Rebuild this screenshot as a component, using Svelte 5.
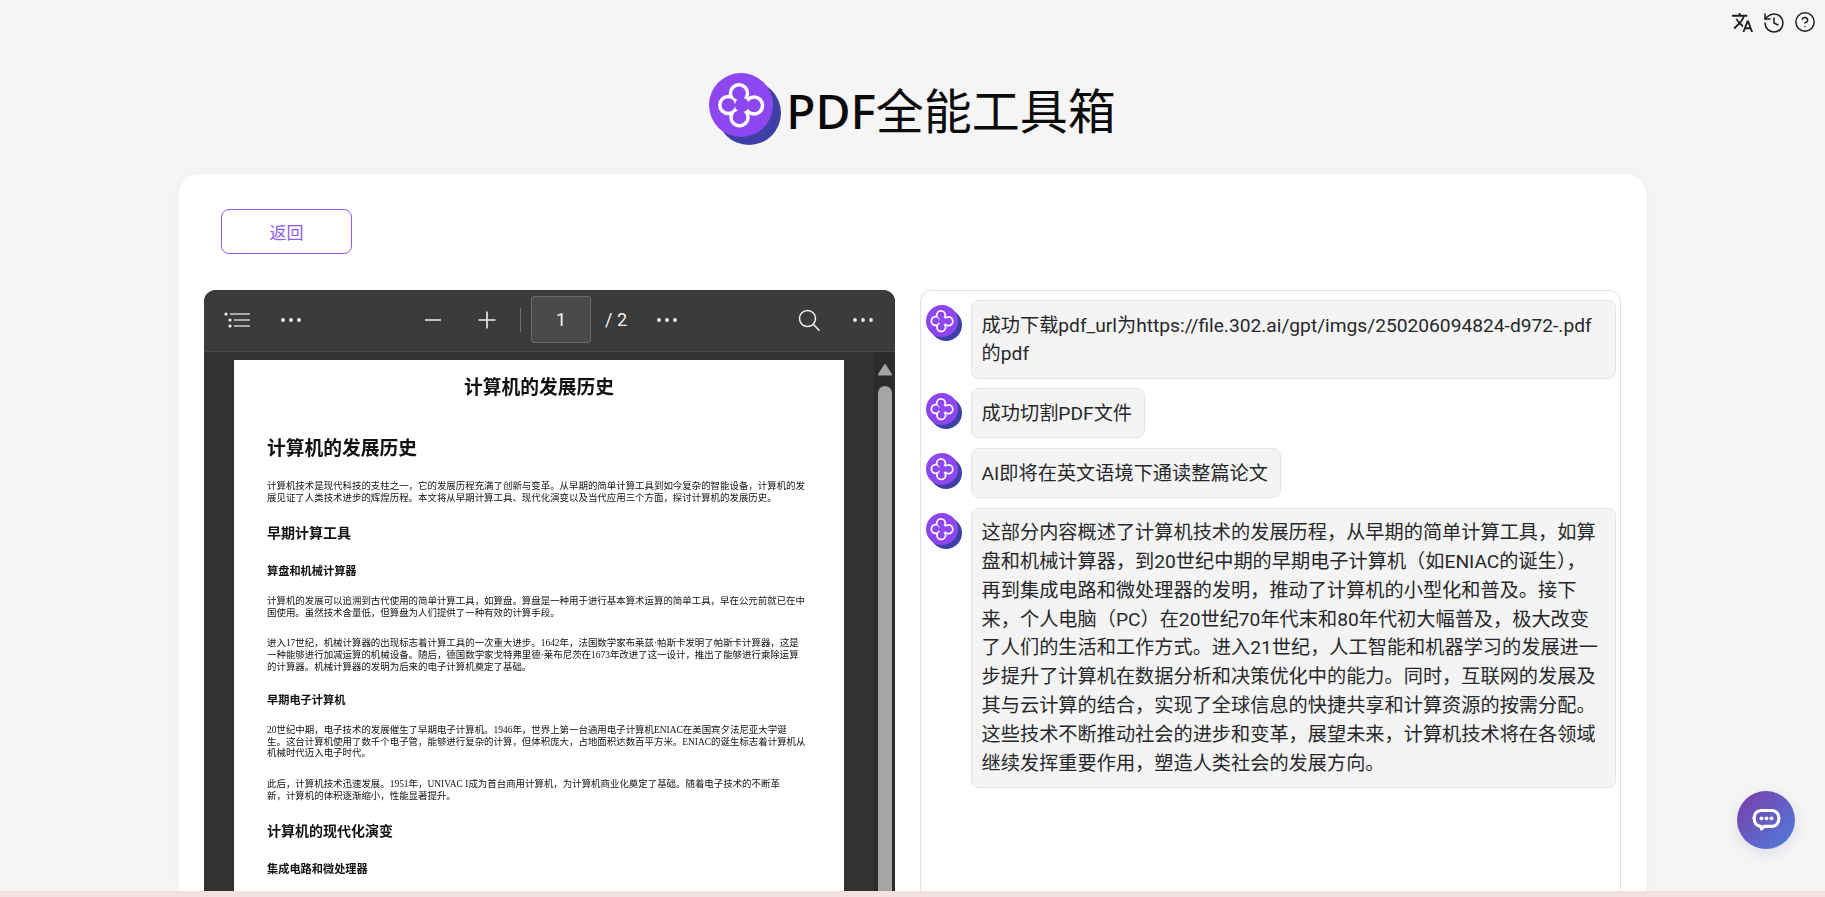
<script>
const messages = [
  '成功下载pdf_url为https://file.302.ai/gpt/imgs/250206094824-d972-.pdf的pdf',
  '成功切割PDF文件',
  'AI即将在英文语境下通读整篇论文',
  '这部分内容概述了计算机技术的发展历程，从早期的简单计算工具，如算盘和机械计算器，到20世纪中期的早期电子计算机（如ENIAC的诞生），再到集成电路和微处理器的发明，推动了计算机的小型化和普及。接下来，个人电脑（PC）在20世纪70年代末和80年代初大幅普及，极大改变了人们的生活和工作方式。进入21世纪，人工智能和机器学习的发展进一步提升了计算机在数据分析和决策优化中的能力。同时，互联网的发展及其与云计算的结合，实现了全球信息的快捷共享和计算资源的按需分配。这些技术不断推动社会的进步和变革，展望未来，计算机技术将在各领域继续发挥重要作用，塑造人类社会的发展方向。'
];

const doc = [
  { t: 'h1', lines: ['计算机的发展历史'] },
  { t: 'p', lines: ['计算机技术是现代科技的支柱之一，它的发展历程充满了创新与变革。从早期的简单计算工具到如今复杂的智能设备，计算机的发', '展见证了人类技术进步的辉煌历程。本文将从早期计算工具、现代化演变以及当代应用三个方面，探讨计算机的发展历史。'] },
  { t: 'h2', lines: ['早期计算工具'] },
  { t: 'h3', lines: ['算盘和机械计算器'] },
  { t: 'p', lines: ['计算机的发展可以追溯到古代使用的简单计算工具，如算盘。算盘是一种用于进行基本算术运算的简单工具，早在公元前就已在中', '国使用。虽然技术含量低，但算盘为人们提供了一种有效的计算手段。'] },
  { t: 'p', lines: ['进入17世纪，机械计算器的出现标志着计算工具的一次重大进步。1642年，法国数学家布莱兹·帕斯卡发明了帕斯卡计算器，这是', '一种能够进行加减运算的机械设备。随后，德国数学家戈特弗里德·莱布尼茨在1673年改进了这一设计，推出了能够进行乘除运算', '的计算器。机械计算器的发明为后来的电子计算机奠定了基础。'] },
  { t: 'h3', lines: ['早期电子计算机'] },
  { t: 'p', lines: ['20世纪中期，电子技术的发展催生了早期电子计算机。1946年，世界上第一台通用电子计算机ENIAC在美国宾夕法尼亚大学诞', '生。这台计算机使用了数千个电子管，能够进行复杂的计算，但体积庞大，占地面积达数百平方米。ENIAC的诞生标志着计算机从', '机械时代迈入电子时代。'] },
  { t: 'p', lines: ['此后，计算机技术迅速发展。1951年，UNIVAC I成为首台商用计算机，为计算机商业化奠定了基础。随着电子技术的不断革', '新，计算机的体积逐渐缩小，性能显著提升。'] },
  { t: 'h2', lines: ['计算机的现代化演变'] },
  { t: 'h3', lines: ['集成电路和微处理器'] }
];

const lobes = [[19.3, 32], [30, 20.3], [45, 32.5], [30.5, 44.3]];
</script>

{#snippet logo(size)}
  <svg class="logo" width={size} height={size} viewBox="0 0 72 72">
    <circle cx="40" cy="40" r="32" fill="#3f40a5" />
    <circle cx="32" cy="32" r="32" fill="#8e47f0" />
    {#each lobes as [x, y]}
      <circle cx={x} cy={y} r="10.3" fill="#fff" />
    {/each}
    <circle cx="33" cy="32" r="7.5" fill="#fff" />
    {#each lobes as [x, y]}
      <circle cx={x} cy={y} r="6.8" fill="#8e47f0" />
    {/each}
    <circle cx="33" cy="32" r="7.2" fill="#8e47f0" />
  </svg>
{/snippet}

{#snippet dots()}
  <button class="tool" type="button" aria-label="more">
    <svg width="20" height="4" viewBox="0 0 20 4" fill="#f1f1f1">
      <circle cx="2" cy="2" r="1.9" /><circle cx="10" cy="2" r="1.9" /><circle cx="18" cy="2" r="1.9" />
    </svg>
  </button>
{/snippet}

<div class="shell">
  <div class="topbar">
    <svg class="top-icon" width="23" height="23" viewBox="0 0 24 24" fill="#1f1f1f">
      <path d="M12.87 15.07l-2.54-2.51.03-.03c1.74-1.94 2.98-4.17 3.71-6.53H17V4h-7V2H8v2H1v1.99h11.17C11.5 7.92 10.4 9.75 9 11.3 8.07 10.29 7.3 9.19 6.69 8h-2c.73 1.63 1.73 3.17 2.98 4.56l-5.09 5.02L4 19l5-5 3.11 3.11.76-2.04zM18.5 10h-2L12 22h2l1.12-3h4.75L21 22h2l-4.5-12zm-2.62 7l1.62-4.33L19.12 17h-3.24z" />
    </svg>
    <svg class="top-icon" width="24" height="24" viewBox="0 0 24 24" fill="none" stroke="#1f1f1f" stroke-width="1.5" stroke-linecap="round" stroke-linejoin="round">
      <path d="M3 12a9 9 0 1 0 9-9 9.75 9.75 0 0 0-6.74 2.74L3 8" /><path d="M3 3v5h5" /><path d="M12 7v5l4 2" />
    </svg>
    <svg class="top-icon" width="22" height="22" viewBox="0 0 24 24" fill="none" stroke="#1f1f1f" stroke-width="1.6" stroke-linecap="round" stroke-linejoin="round">
      <circle cx="12" cy="12" r="10" /><path d="M9.09 9a3 3 0 0 1 5.83 1c0 2-3 3-3 3" /><path d="M12 17h.01" />
    </svg>
  </div>

  <header class="brand">
    {@render logo(72)}
    <h1 class="title"><span class="latin">PDF</span>全能工具箱</h1>
  </header>

  <main class="card">
    <button class="back" type="button">返回</button>

    <div class="columns">
      <section class="viewer">
        <div class="toolbar">
          <div class="group">
            <button class="tool" type="button" aria-label="outline">
              <svg width="26" height="16" viewBox="0 0 26 16" fill="#f1f1f1">
                <circle cx="2" cy="2" r="1.6" /><rect x="6" y="1.4" width="20" height="1.2" />
                <circle cx="6" cy="8" r="1.6" /><rect x="10" y="7.4" width="16" height="1.2" />
                <circle cx="6" cy="14" r="1.6" /><rect x="10" y="13.4" width="16" height="1.2" />
              </svg>
            </button>
            {@render dots()}
          </div>
          <div class="group">
            <button class="tool" type="button" aria-label="zoom out">
              <svg width="18" height="18" viewBox="0 0 18 18" stroke="#f1f1f1" stroke-width="1.6"><path d="M1 9h16" /></svg>
            </button>
            <button class="tool" type="button" aria-label="zoom in">
              <svg width="18" height="18" viewBox="0 0 18 18" stroke="#f1f1f1" stroke-width="1.6"><path d="M0.5 9h17M9 0.5v17" /></svg>
            </button>
            <span class="sep"></span>
            <span class="page-input">1</span>
            <span class="page-total">/ 2</span>
            {@render dots()}
          </div>
          <div class="group">
            <button class="tool" type="button" aria-label="search">
              <svg width="24" height="24" viewBox="0 0 24 24" fill="none" stroke="#f1f1f1" stroke-width="1.5">
                <circle cx="10.5" cy="10.5" r="8" /><path d="M16.3 16.3l6.2 6.4" />
              </svg>
            </button>
            {@render dots()}
          </div>
        </div>

        <div class="viewport">
          <div class="page-wrap">
            <article class="page">
              <h2 class="doc-title">计算机的发展历史</h2>
              {#each doc as block}
                <div class={block.t}>
                  {#each block.lines as line}
                    <div>{line}</div>
                  {/each}
                </div>
              {/each}
            </article>
          </div>
          <div class="scrollbar">
            <svg width="16" height="13" viewBox="0 0 16 13" fill="#a5a5a5" stroke="#a5a5a5" stroke-width="2" stroke-linejoin="round">
              <path d="M8 2l6 9.5H2z" />
            </svg>
            <span class="thumb"></span>
          </div>
        </div>
      </section>

      <section class="chat">
        {#each messages as message}
          <div class="row">
            <div class="avatar">{@render logo(36)}</div>
            <div class="bubble">{message}</div>
          </div>
        {/each}
      </section>
    </div>
  </main>

  <button class="fab" type="button" aria-label="chat">
    <svg width="29" height="24" viewBox="0 0 32 26">
      <path d="M0 10.6h3M29 10.6h3" stroke="#fff" stroke-width="1" />
      <path d="M16 1.2v2" stroke="#fff" stroke-width="1" />
      <path d="M10 2.5h12a7.5 7.5 0 0 1 7.5 8v1.5a7.5 7.5 0 0 1-7.5 8h-8.5l-3 2.8-.6-2.8a7.5 7.5 0 0 1-7.4-8v-1.5a7.5 7.5 0 0 1 7.5-8z" fill="none" stroke="#fff" stroke-width="3.4" stroke-linejoin="round" />
      <circle cx="10.5" cy="11.2" r="2.1" fill="#fff" /><circle cx="16" cy="11.2" r="2.1" fill="#fff" /><circle cx="21.5" cy="11.2" r="2.1" fill="#fff" />
    </svg>
  </button>
</div>

<style>
:global(body) {
  background: #f0e2e1;
  font-family: Roboto, "Noto Sans CJK SC", sans-serif;
  overflow: hidden;
}
.shell {
  height: 891px;
  overflow: hidden;
  background: #f5f5f5;
  display: flex;
  flex-direction: column;
}
.topbar {
  height: 40px;
  box-sizing: border-box;
  padding: 11px 9px 0 0;
  display: flex;
  justify-content: flex-end;
  align-items: flex-start;
  gap: 8px;
  flex: none;
}
.brand {
  margin-top: 33px;
  height: 72px;
  flex: none;
  display: flex;
  justify-content: center;
  align-items: center;
  gap: 5px;
}
.logo {
  display: block;
  flex: none;
}
.title {
  margin: 0;
  font-size: 48px;
  font-weight: 400;
  line-height: 72px;
  color: #0a0a0a;
  font-family: "Noto Sans CJK SC", sans-serif;
}
.latin {
  font-family: "Noto Sans", sans-serif;
  font-weight: 500;
}
.card {
  margin: 29px 179px 0;
  flex: 1;
  min-height: 0;
  background: #fff;
  border-radius: 20px 20px 0 0;
  box-shadow: 0 0 16px rgba(0, 0, 0, 0.03);
  padding: 35px 25px 0;
  display: flex;
  flex-direction: column;
}
.back {
  align-self: flex-start;
  margin-left: 17px;
  width: 131px;
  height: 45px;
  background: #fff;
  border: 1px solid #8e60f0;
  border-radius: 8px;
  color: #8e5cf0;
  font: 17px "Noto Sans CJK SC", sans-serif;
}
.columns {
  margin-top: 36px;
  flex: 1;
  min-height: 0;
  display: flex;
  gap: 25px;
}
.viewer {
  width: 691px;
  flex: none;
  background: #323232;
  border-radius: 12px 12px 0 0;
  overflow: hidden;
  display: flex;
  flex-direction: column;
}
.toolbar {
  height: 62px;
  flex: none;
  box-sizing: border-box;
  padding: 0 5px 2px 6px;
  background: #3b3b3b;
  border-bottom: 1px solid #4a4a4a;
  display: flex;
  justify-content: space-between;
  align-items: center;
}
.group {
  display: flex;
  align-items: center;
}
.tool {
  width: 54px;
  height: 32px;
  padding: 0;
  border: 0;
  background: none;
  display: flex;
  align-items: center;
  justify-content: center;
}
.sep {
  width: 1px;
  height: 24px;
  background: #6e6e6e;
  margin: 0 10px 0 6px;
}
.page-input {
  width: 60px;
  height: 47px;
  box-sizing: border-box;
  background: #4a4a4a;
  border: 1px solid #6b6b6b;
  border-radius: 3px;
  color: #f1f1f1;
  font: 18px/45px Roboto, sans-serif;
  text-align: center;
}
.page-total {
  width: 49px;
  padding-left: 14px;
  box-sizing: border-box;
  color: #f1f1f1;
  font: 18px Roboto, sans-serif;
}
.viewport {
  flex: 1;
  min-height: 0;
  display: flex;
}
.page-wrap {
  flex: 1;
  padding: 8px 30px 0 30px;
  overflow: hidden;
}
.page {
  height: 700px;
  background: #fff;
  color: #111;
  padding: 14px 33px 0;
  box-sizing: border-box;
  font-family: "Liberation Serif", "Noto Sans CJK SC", serif;
  white-space: nowrap;
  filter: blur(0.25px);
}
.doc-title {
  margin: 0;
  font: 700 18.75px/24px "Noto Sans CJK SC", sans-serif;
  text-align: center;
}
.h1 {
  margin-top: 37px;
  margin-bottom: 22px;
  font: 700 18.75px/24px "Noto Sans CJK SC", sans-serif;
}
.h2 {
  margin-top: 19px;
  margin-bottom: 22px;
  font: 700 14px/18px "Noto Sans CJK SC", sans-serif;
}
.h3 {
  margin-top: 19px;
  font: 700 11.2px/14px "Noto Sans CJK SC", sans-serif;
}
.p {
  margin-top: 19px;
  font-size: 9.45px;
  line-height: 11.6px;
}
.scrollbar {
  width: 21px;
  flex: none;
  background: #2b2b2b;
  display: flex;
  flex-direction: column;
  align-items: center;
  padding-top: 11px;
}
.thumb {
  width: 14px;
  margin-top: 10px;
  flex: 1;
  background: #a5a5a5;
  border-radius: 7px 7px 0 0;
}
.chat {
  flex: 1;
  min-width: 0;
  box-sizing: border-box;
  border: 1px solid #e2e2e2;
  border-bottom: 0;
  border-radius: 12px 12px 0 0;
  padding: 9px 4px 0 5px;
  display: flex;
  flex-direction: column;
  gap: 9.6px;
}
.row {
  display: flex;
  align-items: flex-start;
  gap: 9px;
}
.avatar {
  flex: none;
  margin-top: 5px;
}
.bubble {
  box-sizing: border-box;
  min-width: 0;
  padding: 10.6px 12px 8.6px 9.6px;
  background: #f4f4f5;
  border: 1px solid #e4e4e7;
  border-radius: 8px;
  color: #27272a;
  font-size: 19.2px;
  line-height: 28.8px;
}
.fab {
  position: fixed;
  left: 1737px;
  top: 791px;
  width: 58px;
  height: 58px;
  padding: 0;
  border: 0;
  border-radius: 50%;
  background: linear-gradient(135deg, #7e3aa8, #4d80dd);
  box-shadow: 0 4px 14px rgba(80, 90, 160, 0.15);
  display: flex;
  align-items: center;
  justify-content: center;
}
</style>
